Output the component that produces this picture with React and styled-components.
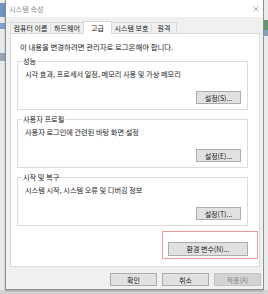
import styled, { createGlobalStyle } from "styled-components";

const GlobalStyle = createGlobalStyle`
  html, body {
    margin: 0;
    padding: 0;
  }
  body {
    width: 268px;
    height: 294px;
    overflow: hidden;
    font-family: "Noto Sans CJK KR", "Noto Sans", sans-serif;
    background: #d3d3d3;
  }
  * {
    box-sizing: border-box;
  }
`;

const Page = styled.div`
  display: flex;
  width: 268px;
  height: 294px;
  background: #d3d3d3;
`;

const Edge = styled.div`
  width: ${(p) => p.w}px;
  height: 290px;
  display: flex;
  flex-direction: column;
  background: #e9eaeb;
`;

const EdgeIcon = styled.div`
  height: ${(p) => p.h}px;
  margin-top: ${(p) => p.top}px;
  background: ${(p) => p.color};
`;

const Window = styled.div`
  width: 259px;
  height: 290px;
  display: flex;
  flex-direction: column;
  background: #f0f0f0;
  border: 1px solid #8f8f8f;
  border-top: none;
  box-shadow: 0 1px 2px rgba(0, 0, 0, 0.25);
`;

const TitleBar = styled.div`
  height: 17px;
  flex: none;
  display: flex;
  align-items: center;
  justify-content: space-between;
  padding: 0 4px 0 3px;
  background: #ffffff;
`;

const Title = styled.span`
  font-size: 7.2px;
  line-height: 10px;
  color: #8d8d8d;
`;

const Body = styled.div`
  flex: 1;
  display: flex;
  flex-direction: column;
  padding: 4px 3px 0 4px;
`;

const TabRow = styled.div`
  display: flex;
  align-items: flex-end;
  height: 12px;
`;

const Tab = styled.div`
  position: relative;
  z-index: ${(p) => (p.active ? 1 : 0)};
  width: ${(p) => p.w}px;
  height: ${(p) => (p.active ? 13 : 11)}px;
  margin-right: -1px;
  margin-bottom: ${(p) => (p.active ? -1 : 0)}px;
  display: flex;
  align-items: center;
  justify-content: center;
  font-size: 7px;
  color: #1a1a1a;
  background: ${(p) => (p.active ? "#ffffff" : "#f0f0f0")};
  border: 1px solid #d9d9d9;
  border-bottom: none;
`;

const Panel = styled.div`
  height: 234px;
  display: flex;
  flex-direction: column;
  padding: 0 11px 0 6px;
  background: #ffffff;
  border: 1px solid #d9d9d9;
`;

const Notice = styled.p`
  margin: 8px 0 0 3px;
  font-size: 7.4px;
  line-height: 10px;
  color: #1a1a1a;
`;

const Group = styled.fieldset`
  margin: 4px 0 0;
  padding: 3px 6px 5px 7px;
  min-width: 0;
  border: 1px solid #dcdcdc;
`;

const Legend = styled.legend`
  margin-left: -3px;
  padding: 0 1px;
  font-size: 7.2px;
  line-height: 10px;
  color: #1a1a1a;
`;

const Desc = styled.p`
  margin: 0;
  font-size: 7.2px;
  line-height: 10px;
  color: #1a1a1a;
`;

const ButtonRow = styled.div`
  display: flex;
  justify-content: flex-end;
  margin-top: 12px;
`;

const Button = styled.button`
  width: ${(p) => p.w}px;
  height: ${(p) => p.h || 13}px;
  padding: 0;
  font-family: inherit;
  font-size: 7px;
  line-height: 10px;
  color: ${(p) => (p.disabled ? "#8a8a8a" : "#1a1a1a")};
  background: ${(p) => (p.disabled ? "#d3d3d3" : "#e1e1e1")};
  border: 1px solid ${(p) => (p.disabled ? "#c4c4c4" : "#adadad")};
  border-radius: 0;
`;

const Highlight = styled.div`
  align-self: flex-end;
  margin: 5px -10px 0 0;
  padding: 1px 9px 1px 5px;
  border: 1px solid #f19a9a;
`;

const Footer = styled.div`
  display: flex;
  justify-content: flex-end;
  gap: 5px;
  margin: 6px -1px 0 0;
`;

const groups = [
  { title: "성능", desc: "시각 효과, 프로세서 일정, 메모리 사용 및 가상 메모리", btn: "설정(S)..." },
  { title: "사용자 프로필", desc: "사용자 로그인에 관련된 바탕 화면 설정", btn: "설정(E)..." },
  { title: "시작 및 복구", desc: "시스템 시작, 시스템 오류 및 디버깅 정보", btn: "설정(T)..." },
];

const tabs = [
  { label: "컴퓨터 이름", w: 41 },
  { label: "하드웨어", w: 34 },
  { label: "고급", w: 29, active: true },
  { label: "시스템 보호", w: 41 },
  { label: "원격", w: 26 },
];

export default function App() {
  return (
    <>
      <GlobalStyle />
      <Page>
        <Edge w={5}>
          <EdgeIcon h={14} top={3} color="#6d97c6" />
          <EdgeIcon h={6} top={6} color="#7ea2c9" />
          <EdgeIcon h={8} top={24} color="#9aa6b3" />
        </Edge>
        <Window>
          <TitleBar>
            <Title>시스템 속성</Title>
            <svg width="6" height="6" viewBox="0 0 6 6">
              <path d="M0.5 0.5 L5.5 5.5 M5.5 0.5 L0.5 5.5" stroke="#9a9a9a" strokeWidth="0.8" />
            </svg>
          </TitleBar>
          <Body>
            <TabRow>
              {tabs.map((t) => (
                <Tab key={t.label} w={t.w} active={t.active}>
                  {t.label}
                </Tab>
              ))}
            </TabRow>
            <Panel>
              <Notice>이 내용을 변경하려면 관리자로 로그온해야 합니다.</Notice>
              {groups.map((g) => (
                <Group key={g.title}>
                  <Legend>{g.title}</Legend>
                  <Desc>{g.desc}</Desc>
                  <ButtonRow>
                    <Button w={45}>{g.btn}</Button>
                  </ButtonRow>
                </Group>
              ))}
              <Highlight>
                <Button w={80} h={14}>환경 변수(N)...</Button>
              </Highlight>
            </Panel>
            <Footer>
              <Button w={47}>확인</Button>
              <Button w={47}>취소</Button>
              <Button w={47} disabled>적용(A)</Button>
            </Footer>
          </Body>
        </Window>
        <Edge w={4}>
          <EdgeIcon h={10} top={20} color="#5f9a6b" />
          <EdgeIcon h={6} top={0} color="#7d9fc4" />
        </Edge>
      </Page>
    </>
  );
}
